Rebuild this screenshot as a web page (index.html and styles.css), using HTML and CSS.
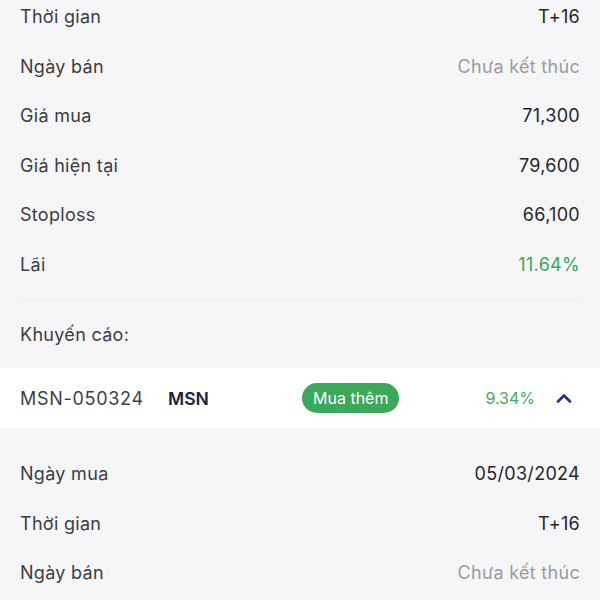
FILE: index.html
```html
<!DOCTYPE html>
<html lang="vi">

    <head>
        <meta charset="UTF-8">
        <meta name="viewport" content="width=device-width, initial-scale=1.0">
        <title>Khuyến cáo</title>
        <link rel="stylesheet" href="styles.css">
    </head>

    <body>

        <section class="details details-top">
            <div class="row"><span class="label">Thời gian</span><span class="value">T+16</span></div>
            <div class="row"><span class="label">Ngày bán</span><span class="value muted">Chưa kết thúc</span></div>
            <div class="row"><span class="label">Giá mua</span><span class="value">71,300</span></div>
            <div class="row"><span class="label">Giá hiện tại</span><span class="value">79,600</span></div>
            <div class="row"><span class="label">Stoploss</span><span class="value">66,100</span></div>
            <div class="row"><span class="label">Lãi</span><span class="value up">11.64%</span></div>
            <hr class="divider">
            <div class="advice">Khuyến cáo:</div>
        </section>

        <div class="trade">
            <span class="trade-id">MSN-050324</span>
            <span class="trade-symbol">MSN</span>
            <span class="badge">Mua thêm</span>
            <span class="trade-pct">9.34%</span>
            <svg class="chevron" width="16" height="10" viewBox="0 0 16 10">
                <path d="M2 8.5 L8 2.5 L14 8.5" fill="none" stroke="#1d2f8f" stroke-width="2.6"
                    stroke-linecap="round" stroke-linejoin="round" />
            </svg>
        </div>

        <section class="details details-bottom">
            <div class="row"><span class="label">Ngày mua</span><span class="value">05/03/2024</span></div>
            <div class="row"><span class="label">Thời gian</span><span class="value">T+16</span></div>
            <div class="row"><span class="label">Ngày bán</span><span class="value muted">Chưa kết thúc</span></div>
        </section>

    </body>

</html>
```

FILE: styles.css
```css
body {
    font-family: Inter, 'Noto Sans', sans-serif;
    background-color: #f6f6f8;
    margin: 0;
    padding: 0;
    height: 600px;
    overflow: hidden;
}

.details {
    padding: 0 20px;
}

.details-top {
    margin-top: -8px;
}

.details-bottom {
    padding-top: 21px;
}

.row {
    display: flex;
    justify-content: space-between;
    align-items: center;
    height: 49.5px;
    font-size: 18px;
    letter-spacing: 0.3px;
}

.label {
    color: #3d3d3f;
}

.value {
    color: #262628;
}

.muted {
    color: #9b9b9e;
}

.up {
    color: #3aa65a;
}

.divider {
    border: none;
    border-top: 1px solid #ebebee;
    margin: 10px 0 0;
}

.advice {
    height: 68px;
    display: flex;
    align-items: center;
    font-size: 18px;
    letter-spacing: 0.3px;
    color: #3d3d3f;
}

.trade {
    background-color: #fff;
    height: 60px;
    display: flex;
    align-items: center;
    padding: 0 28px 0 20px;
}

.trade-id {
    width: 148px;
    font-size: 18px;
    letter-spacing: 0.7px;
    color: #3f3f42;
}

.trade-symbol {
    width: 134px;
    font-size: 17.5px;
    font-weight: 600;
    color: #1b2238;
}

.badge {
    background-color: #3da75a;
    color: #fff;
    font-size: 16px;
    height: 30px;
    line-height: 30px;
    padding: 0 11px;
    border-radius: 15px;
}

.trade-pct {
    margin-left: auto;
    font-size: 16px;
    color: #46a862;
}

.chevron {
    margin-left: 21px;
}
```
